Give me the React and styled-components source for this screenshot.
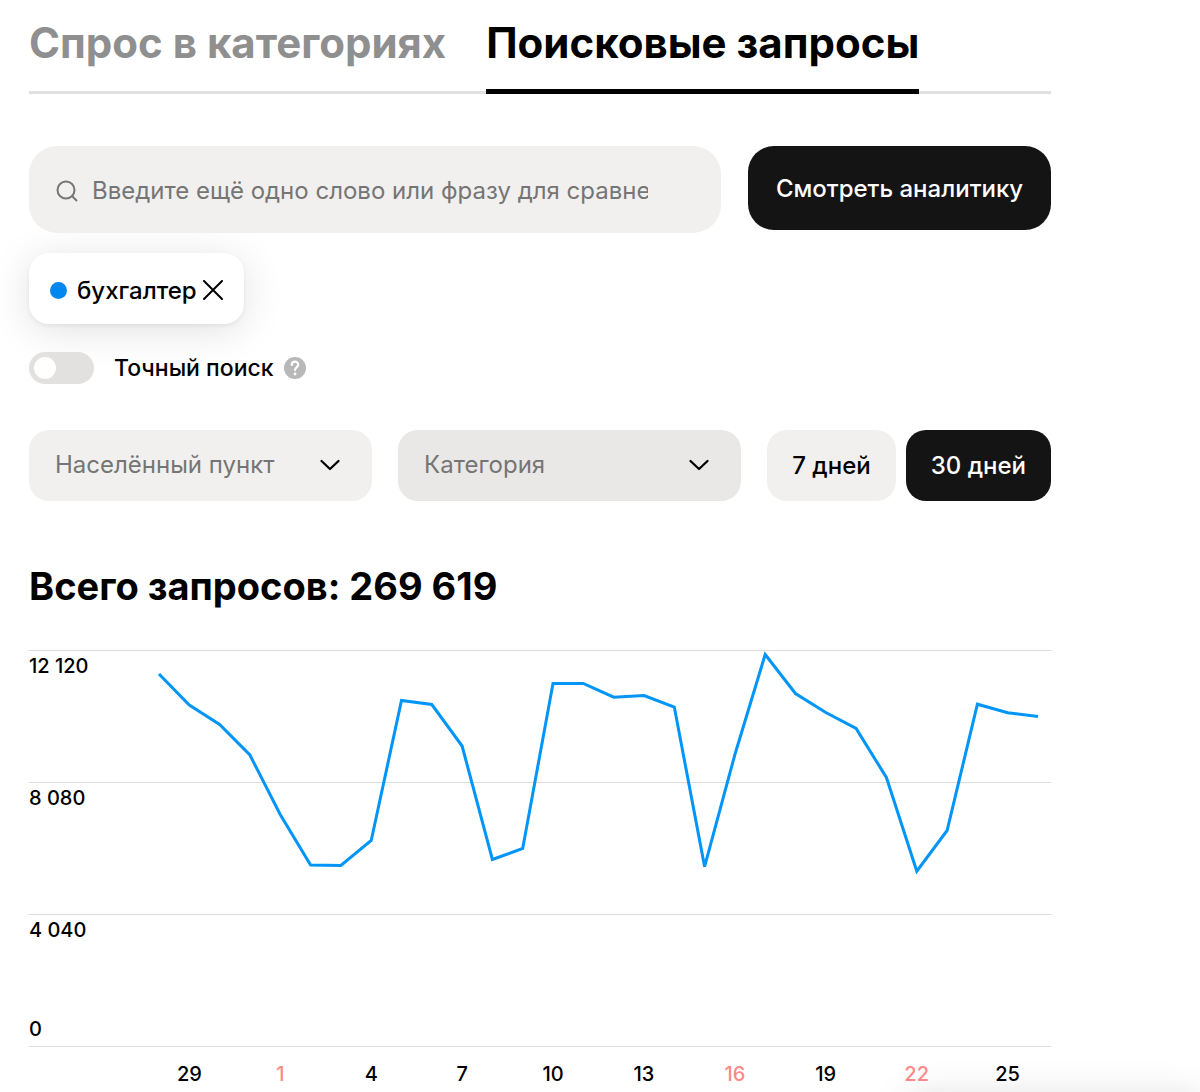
import React, { useState } from 'react';
import styled, { createGlobalStyle } from 'styled-components';

/* ================= DATA ================= */

const TABS = ['Спрос в категориях', 'Поисковые запросы'];

const PERIODS = [7, 30];

const MAX_VALUE = 12120;

const GRID_LABELS = ['12 120', '8 080', '4 040'];

const VALUES = [
    11385, 10437, 9840, 8906, 7085, 5540, 5524, 6290, 10574, 10452,
    9182, 5708, 6045, 11095, 11095, 10675, 10727, 10375, 5490, 8922,
    11982, 10789, 10207, 9717, 8218, 5350, 6596, 10461, 10198, 10085
];

const DAYS = [
    { label: 29 },
    { label: 1, weekend: true },
    { label: 4 },
    { label: 7 },
    { label: 10 },
    { label: 13 },
    { label: 16, weekend: true },
    { label: 19 },
    { label: 22, weekend: true },
    { label: 25 }
];

const CHART = { width: 1022, height: 396, left: 130, right: 1009 };

const chartPoints = VALUES.map((value, i) => {
    const x = CHART.left + (i * (CHART.right - CHART.left)) / (VALUES.length - 1);
    const y = CHART.height * (1 - value / MAX_VALUE);
    return `${x.toFixed(1)},${y.toFixed(1)}`;
}).join(' ');

/* ================= STYLES ================= */

const GlobalStyle = createGlobalStyle`
    * {
        box-sizing: border-box;
    }

    body {
        margin: 0;
        background: #fff;
        color: #000;
        font-family: Inter, "Liberation Sans", sans-serif;
        font-size: 24px;
        font-weight: 500;
        overflow-x: hidden;
    }

    button, input, select {
        font: inherit;
        color: inherit;
        margin: 0;
        border: 0;
    }

    button, select {
        cursor: pointer;
    }
`;

const Page = styled.main`
    padding: 16px 149px 0 29px;
`;

const Tabs = styled.div`
    display: flex;
    gap: 40px;
    box-shadow: inset 0 -3px #e0e0e0;
`;

const Tab = styled.button`
    height: 78px;
    padding: 0 0 20px;
    background: none;
    border-bottom: 5px solid ${({ $active }) => ($active ? '#000' : 'transparent')};
    color: ${({ $active }) => ($active ? '#000' : '#8f8f8f')};
    font-size: 42px;
    line-height: 52px;
    font-weight: 700;
    white-space: nowrap;
`;

const SearchRow = styled.form`
    display: flex;
    align-items: flex-start;
    gap: 27px;
    margin-top: 52px;
`;

const SearchBox = styled.label`
    flex: 1;
    min-width: 0;
    height: 87px;
    display: flex;
    align-items: center;
    gap: 14px;
    padding: 2px 73px 0 27px;
    background: #f1f0ee;
    border-radius: 28px;
    color: #757575;
`;

const SearchInput = styled.input`
    flex: 1;
    min-width: 0;
    padding: 0;
    background: none;
    outline: none;
    color: #000;
    font-weight: 400;

    &::placeholder {
        color: #757575;
        opacity: 1;
    }
`;

const SubmitButton = styled.button`
    flex: 0 0 303px;
    height: 84px;
    padding: 0;
    background: #141414;
    border-radius: 26px;
    color: #fff;
`;

const Chip = styled.div`
    width: fit-content;
    height: 71px;
    display: flex;
    align-items: center;
    margin-top: 20px;
    padding: 3px 21px 0;
    background: #fff;
    border-radius: 20px;
    box-shadow: 0 2px 4px rgba(0, 0, 0, 0.06), 0 6px 40px rgba(0, 0, 0, 0.12);
`;

const ChipDot = styled.span`
    width: 17px;
    height: 17px;
    margin-right: 10px;
    border-radius: 50%;
    background: #0088f0;
`;

const IconButton = styled.button`
    display: flex;
    padding: 0;
    background: none;
`;

const ChipClose = styled(IconButton)`
    margin-left: 6px;
`;

const ExactRow = styled.div`
    display: flex;
    align-items: center;
    margin-top: 28px;
    height: 32px;
`;

const Toggle = styled.input`
    appearance: none;
    width: 65px;
    height: 32px;
    padding: 5px;
    border-radius: 16px;
    background: ${({ checked }) => (checked ? '#141414' : '#e2e1df')};
    cursor: pointer;

    &::before {
        content: "";
        display: block;
        width: 22px;
        height: 22px;
        margin-left: ${({ checked }) => (checked ? '33px' : '0')};
        border-radius: 50%;
        background: #fff;
    }
`;

const ToggleLabel = styled.label`
    margin: 0 10px 0 20px;
    font-size: 23px;
    cursor: pointer;
`;

const Filters = styled.div`
    display: flex;
    gap: 26px;
    margin-top: 46px;
`;

const SelectBox = styled.div`
    flex: 1;
    min-width: 0;
    position: relative;
    color: #000;

    svg {
        position: absolute;
        top: 28px;
        right: 31px;
        pointer-events: none;
    }
`;

const Select = styled.select`
    appearance: none;
    width: 100%;
    height: 71px;
    padding: 0 64px 2px 26px;
    border-radius: 20px;
    background: ${({ $dark }) => ($dark ? '#e9e8e6' : '#f1f0ee')};
    color: #757575;
    font-weight: 400;
`;

const Periods = styled.div`
    display: flex;
    gap: 10px;
`;

const PeriodButton = styled.button`
    height: 71px;
    padding: 0 25px;
    border-radius: 20px;
    background: ${({ $active }) => ($active ? '#141414' : '#f1f0ee')};
    color: ${({ $active }) => ($active ? '#fff' : '#000')};
    white-space: nowrap;
`;

const Total = styled.h2`
    margin: 61px 0 0;
    font-size: 38px;
    line-height: 48px;
    font-weight: 700;
`;

const Plot = styled.div`
    position: relative;
    margin-top: 40px;
    border-bottom: 1px solid #dcdcdc;
`;

const GridRow = styled.div`
    height: 132px;
    display: flex;
    flex-direction: column;
    justify-content: space-between;
    padding: 2px 0 4px;
    border-top: 1px solid #dcdcdc;
    font-size: 20px;
    line-height: 26px;
`;

const ChartSvg = styled.svg`
    position: absolute;
    inset: 0;
    width: 100%;
    height: 396px;
    overflow: visible;
`;

const DayAxis = styled.div`
    display: grid;
    grid-template-columns: repeat(10, 1fr);
    margin: 13px -2px 0 115px;
    font-size: 20px;
    line-height: 28px;
    text-align: center;
`;

const Day = styled.span`
    color: ${({ $weekend }) => ($weekend ? '#ff8a8a' : '#000')};
`;

/* top edge of the floating panel docked under the viewport */
const DockedPanel = styled.div`
    position: fixed;
    top: 100%;
    right: 0;
    width: 290px;
    height: 100px;
    box-shadow: 0 8px 40px rgba(0, 0, 0, 0.16);
`;

/* ================= ICONS ================= */

const SearchIcon = () => (
    <svg width="22" height="22" viewBox="0 0 22 22" fill="none" stroke="currentColor" strokeWidth="2">
        <circle cx="10" cy="10" r="8.5" />
        <path d="M16 16 21 21" />
    </svg>
);

const CloseIcon = () => (
    <svg width="20" height="20" viewBox="0 0 20 20" fill="none" stroke="#000" strokeWidth="2" strokeLinecap="round">
        <path d="M1 1 19 19M19 1 1 19" />
    </svg>
);

const ChevronIcon = () => (
    <svg width="22" height="14" viewBox="0 0 22 14" fill="none" stroke="currentColor" strokeWidth="2.3" strokeLinecap="round" strokeLinejoin="round">
        <path d="M2.5 3 11 11 19.5 3" />
    </svg>
);

const HelpIcon = () => (
    <svg width="22" height="22" viewBox="0 0 22 22" fill="none">
        <circle cx="11" cy="11" r="11" fill="#b8b8b8" />
        <path d="M7.8 8C7.8 6 9.2 4.700 11 4.700s3.200 1.200 3.200 3.100c0 2.600-3.200 2.700-3.200 5.300" stroke="#fff" strokeWidth="2.2" strokeLinecap="round" />
        <circle cx="11" cy="17" r="1.400" fill="#fff" />
    </svg>
);

/* ================= PAGE ================= */

const App = () => {
    const [tab, setTab] = useState(TABS[1]);
    const [query, setQuery] = useState('');
    const [words, setWords] = useState(['бухгалтер']);
    const [exact, setExact] = useState(false);
    const [period, setPeriod] = useState(30);

    const handleSubmit = (e) => {
        e.preventDefault();
        if (!query.trim()) return;
        setWords([...words, query.trim()]);
        setQuery('');
    };

    return (
        <>
            <GlobalStyle />
            <Page>
                <Tabs role="tablist">
                    {TABS.map((name) => (
                        <Tab
                            key={name}
                            type="button"
                            role="tab"
                            aria-selected={name === tab}
                            $active={name === tab}
                            onClick={() => setTab(name)}
                        >
                            {name}
                        </Tab>
                    ))}
                </Tabs>

                <SearchRow onSubmit={handleSubmit}>
                    <SearchBox>
                        <SearchIcon />
                        <SearchInput
                            type="text"
                            aria-label="Поисковый запрос"
                            placeholder="Введите ещё одно слово или фразу для сравнения"
                            value={query}
                            onChange={(e) => setQuery(e.target.value)}
                        />
                    </SearchBox>
                    <SubmitButton type="submit">Смотреть аналитику</SubmitButton>
                </SearchRow>

                {words.map((word) => (
                    <Chip key={word}>
                        <ChipDot />
                        {word}
                        <ChipClose
                            type="button"
                            aria-label="Удалить"
                            onClick={() => setWords(words.filter((w) => w !== word))}
                        >
                            <CloseIcon />
                        </ChipClose>
                    </Chip>
                ))}

                <ExactRow>
                    <Toggle
                        id="exact"
                        type="checkbox"
                        role="switch"
                        checked={exact}
                        onChange={(e) => setExact(e.target.checked)}
                    />
                    <ToggleLabel htmlFor="exact">Точный поиск</ToggleLabel>
                    <IconButton type="button" aria-label="Подсказка">
                        <HelpIcon />
                    </IconButton>
                </ExactRow>

                <Filters>
                    <SelectBox>
                        <Select aria-label="Населённый пункт">
                            <option>Населённый пункт</option>
                        </Select>
                        <ChevronIcon />
                    </SelectBox>
                    <SelectBox>
                        <Select aria-label="Категория" $dark>
                            <option>Категория</option>
                        </Select>
                        <ChevronIcon />
                    </SelectBox>
                    <Periods>
                        {PERIODS.map((days) => (
                            <PeriodButton
                                key={days}
                                type="button"
                                $active={days === period}
                                onClick={() => setPeriod(days)}
                            >
                                {days} дней
                            </PeriodButton>
                        ))}
                    </Periods>
                </Filters>

                <Total>Всего запросов: 269 619</Total>

                <Plot>
                    {GRID_LABELS.map((label, i) => (
                        <GridRow key={label}>
                            <span>{label}</span>
                            {i === GRID_LABELS.length - 1 && <span>0</span>}
                        </GridRow>
                    ))}
                    <ChartSvg
                        viewBox={`0 0 ${CHART.width} ${CHART.height}`}
                        preserveAspectRatio="none"
                        aria-hidden="true"
                    >
                        <polyline
                            points={chartPoints}
                            fill="none"
                            stroke="#0095f7"
                            strokeWidth="3"
                            vectorEffect="non-scaling-stroke"
                        />
                    </ChartSvg>
                </Plot>

                <DayAxis>
                    {DAYS.map(({ label, weekend }) => (
                        <Day key={label} $weekend={weekend}>{label}</Day>
                    ))}
                </DayAxis>
            </Page>
            <DockedPanel />
        </>
    );
};

export default App;
